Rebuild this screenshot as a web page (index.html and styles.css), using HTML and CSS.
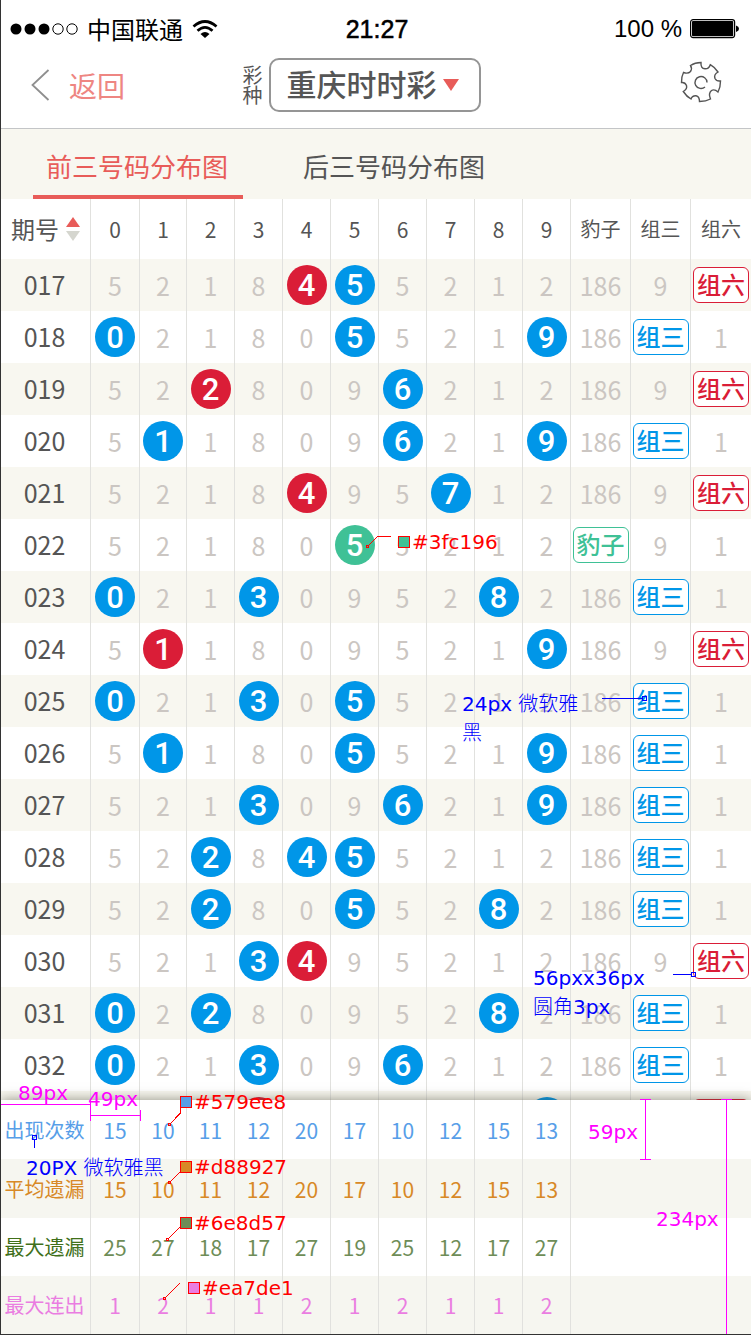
FILE: index.html
```html
<!DOCTYPE html>
<html lang="zh-CN">
<head>
<meta charset="utf-8">
<meta name="viewport" content="width=device-width, initial-scale=1">
<title>前三号码分布图</title>
<link rel="stylesheet" href="styles.css">
</head>
<body>
<div class="screen">
  <div class="status">
    <div class="carrier">
      <svg width="68" height="12" viewBox="0 0 68 12"><g fill="#000"><circle cx="6" cy="6" r="5.5"/><circle cx="20" cy="6" r="5.5"/><circle cx="34" cy="6" r="5.5"/></g><g fill="none" stroke="#000"><circle cx="48" cy="6" r="5.2"/><circle cx="62" cy="6" r="5.2"/></g></svg>
      <span>中国联通</span>
      <svg width="26" height="18" viewBox="0 0 26 18"><g fill="none" stroke="#000" stroke-width="2.8"><path d="M1.5 6.500Q13-3.500 24.500 6.500"/><path d="M5.500 10.800Q13 4 20.500 10.800"/></g><path d="M8.500 14Q13 9.800 17.500 14L13 18z"/></svg>
    </div>
    <time class="clock">21:27</time>
    <div class="power">
      <span>100 %</span>
      <svg width="50" height="20" viewBox="0 0 50 20"><rect x=".6" y=".6" width="44" height="18" rx="2.500" fill="none" stroke="#000" stroke-width="1.200"/><rect x="2" y="2" width="41.200" height="15.200" rx="1"/><path d="M46 6.500q3 1 3 3.300t-3 3.300z"/></svg>
    </div>
  </div>

  <header class="nav">
    <a class="back" href="#">
      <svg width="19" height="32" viewBox="0 0 19 32"><path d="M17.500 1L1.500 16L17.500 31" fill="none" stroke="#8f8f8f" stroke-width="1.800"/></svg>
      <span>返回</span>
    </a>
    <div class="lottery">
      <label for="lottery">彩种</label>
      <div class="picker">
        <select id="lottery"><option>重庆时时彩</option></select>
        <svg width="16" height="12" viewBox="0 0 16 12"><path d="M0 0H16L8 12z" fill="#e85c59"/></svg>
      </div>
    </div>
    <button class="settings" type="button" aria-label="设置">
      <svg width="42" height="42" viewBox="0 0 42 42" fill="none" stroke="#555" stroke-width="1.400"><path d="M10.500 4.500Q15 1.500 21 1.500Q20.500 7.500 25 7.800Q29 7.900 30.300 3.700Q34.500 6 38 11Q33.500 13.500 35 17.500Q36.500 20.500 40.500 20Q40.500 26.500 38 31Q34.500 27.700 31.500 29.500Q28 32.500 30.500 38Q26 40.500 19.500 40.500Q19.500 35.500 16 34.700Q12 34.500 11 38Q6.500 35.500 3.300 30.500Q7.500 28 6.500 24.500Q5 21 1.500 21.500Q1.200 16 3.500 11.500Q8 13.200 10.500 10.500Q12.500 7.500 10.500 4.500Z"/><path d="M27 21.500A6 6 0 1 0 25 26"/></svg>
    </button>
  </header>

  <nav class="tabs">
    <a class="tab active" href="#" aria-current="page">前三号码分布图</a>
    <a class="tab" href="#">后三号码分布图</a>
  </nav>

  <table class="grid chart">
    <colgroup><col class="c-issue"><col class="c-one"><col class="c-two"><col span="8" class="c-num"><col span="3" class="c-type"></colgroup>
    <thead>
      <tr><th class="issue"><button class="sort" type="button">期号<svg width="14" height="24" viewBox="0 0 14 24"><path d="M7 0L14 10H0z" fill="#e85c59"/><path d="M0 14H14L7 24z" fill="#d5d6cf"/></svg></button></th><th>0</th><th>1</th><th>2</th><th>3</th><th>4</th><th>5</th><th>6</th><th>7</th><th>8</th><th>9</th><th class="kind">豹子</th><th class="kind">组三</th><th class="kind">组六</th></tr>
    </thead>
    <tbody>
      <tr><th>017</th><td>5</td><td>2</td><td>1</td><td>8</td><td><b class="red">4</b></td><td><b>5</b></td><td>5</td><td>2</td><td>1</td><td>2</td><td>186</td><td>9</td><td><em class="six">组六</em></td></tr>
      <tr><th>018</th><td><b>0</b></td><td>2</td><td>1</td><td>8</td><td>0</td><td><b>5</b></td><td>5</td><td>2</td><td>1</td><td><b>9</b></td><td>186</td><td><em>组三</em></td><td>1</td></tr>
      <tr><th>019</th><td>5</td><td>2</td><td><b class="red">2</b></td><td>8</td><td>0</td><td>9</td><td><b>6</b></td><td>2</td><td>1</td><td>2</td><td>186</td><td>9</td><td><em class="six">组六</em></td></tr>
      <tr><th>020</th><td>5</td><td><b>1</b></td><td>1</td><td>8</td><td>0</td><td>9</td><td><b>6</b></td><td>2</td><td>1</td><td><b>9</b></td><td>186</td><td><em>组三</em></td><td>1</td></tr>
      <tr><th>021</th><td>5</td><td>2</td><td>1</td><td>8</td><td><b class="red">4</b></td><td>9</td><td>5</td><td><b>7</b></td><td>1</td><td>2</td><td>186</td><td>9</td><td><em class="six">组六</em></td></tr>
      <tr><th>022</th><td>5</td><td>2</td><td>1</td><td>8</td><td>0</td><td><b class="green">5</b></td><td>5</td><td>2</td><td>1</td><td>2</td><td><em class="triple">豹子</em></td><td>9</td><td>1</td></tr>
      <tr><th>023</th><td><b>0</b></td><td>2</td><td>1</td><td><b>3</b></td><td>0</td><td>9</td><td>5</td><td>2</td><td><b>8</b></td><td>2</td><td>186</td><td><em>组三</em></td><td>1</td></tr>
      <tr><th>024</th><td>5</td><td><b class="red">1</b></td><td>1</td><td>8</td><td>0</td><td>9</td><td>5</td><td>2</td><td>1</td><td><b>9</b></td><td>186</td><td>9</td><td><em class="six">组六</em></td></tr>
      <tr><th>025</th><td><b>0</b></td><td>2</td><td>1</td><td><b>3</b></td><td>0</td><td><b>5</b></td><td>5</td><td>2</td><td>1</td><td>2</td><td>186</td><td><em>组三</em></td><td>1</td></tr>
      <tr><th>026</th><td>5</td><td><b>1</b></td><td>1</td><td>8</td><td>0</td><td><b>5</b></td><td>5</td><td>2</td><td>1</td><td><b>9</b></td><td>186</td><td><em>组三</em></td><td>1</td></tr>
      <tr><th>027</th><td>5</td><td>2</td><td>1</td><td><b>3</b></td><td>0</td><td>9</td><td><b>6</b></td><td>2</td><td>1</td><td><b>9</b></td><td>186</td><td><em>组三</em></td><td>1</td></tr>
      <tr><th>028</th><td>5</td><td>2</td><td><b>2</b></td><td>8</td><td><b>4</b></td><td><b>5</b></td><td>5</td><td>2</td><td>1</td><td>2</td><td>186</td><td><em>组三</em></td><td>1</td></tr>
      <tr><th>029</th><td>5</td><td>2</td><td><b>2</b></td><td>8</td><td>0</td><td><b>5</b></td><td>5</td><td>2</td><td><b>8</b></td><td>2</td><td>186</td><td><em>组三</em></td><td>1</td></tr>
      <tr><th>030</th><td>5</td><td>2</td><td>1</td><td><b>3</b></td><td><b class="red">4</b></td><td>9</td><td>5</td><td>2</td><td>1</td><td>2</td><td>186</td><td>9</td><td><em class="six">组六</em></td></tr>
      <tr><th>031</th><td><b>0</b></td><td>2</td><td><b>2</b></td><td>8</td><td>0</td><td>9</td><td>5</td><td>2</td><td><b>8</b></td><td>2</td><td>186</td><td><em>组三</em></td><td>1</td></tr>
      <tr><th>032</th><td><b>0</b></td><td>2</td><td>1</td><td><b>3</b></td><td>0</td><td>9</td><td><b>6</b></td><td>2</td><td>1</td><td>2</td><td>186</td><td><em>组三</em></td><td>1</td></tr>
      <tr class="peek"><th></th><td></td><td></td><td></td><td><b class="red"></b></td><td></td><td></td><td></td><td></td><td></td><td><b></b></td><td></td><td></td><td><em class="six"></em></td></tr>
    </tbody>
  </table>

  <div class="summary">
    <table class="grid totals">
      <colgroup><col class="c-issue"><col class="c-one"><col class="c-two"><col span="8" class="c-num"><col span="3" class="c-type"></colgroup>
      <tbody>
        <tr class="count"><th>出现次数</th><td>15</td><td>10</td><td>11</td><td>12</td><td>20</td><td>17</td><td>10</td><td>12</td><td>15</td><td>13</td><td colspan="3"></td></tr>
        <tr class="average"><th>平均遗漏</th><td>15</td><td>10</td><td>11</td><td>12</td><td>20</td><td>17</td><td>10</td><td>12</td><td>15</td><td>13</td><td colspan="3"></td></tr>
        <tr class="longest"><th>最大遗漏</th><td>25</td><td>27</td><td>18</td><td>17</td><td>27</td><td>19</td><td>25</td><td>12</td><td>17</td><td>27</td><td colspan="3"></td></tr>
        <tr class="streak"><th>最大连出</th><td>1</td><td>2</td><td>1</td><td>1</td><td>2</td><td>1</td><td>2</td><td>1</td><td>1</td><td>2</td><td colspan="3"></td></tr>
      </tbody>
    </table>
  </div>

  <!-- Design notes pinned over the screen -->
  <div class="notes">
    <svg class="leaders" width="751" height="1335" viewBox="0 0 751 1335" fill="none" shape-rendering="crispEdges">
      <g stroke="#f00"><path d="M368 546L377.500 536.500H391"/><path d="M170 1124L180.500 1113V1107"/><path d="M170 1182L180 1172"/><path d="M168 1239L180 1227"/><path d="M165 1298L180 1283"/>
        <path d="M366.500 545.500h2v2h-2zM168.500 1123.500h2v2h-2zM168.500 1181.500h2v2h-2zM166.500 1238.500h2v2h-2zM163.500 1297.500h2v2h-2z"/>
        <rect x="398.500" y="536.500" width="11" height="11" fill="#3fc196"/><rect x="180.500" y="1096.500" width="11" height="11" fill="#579ee8"/><rect x="180.500" y="1161.500" width="11" height="11" fill="#d88927"/><rect x="180.500" y="1217.500" width="11" height="11" fill="#6e8d57"/><rect x="188.500" y="1282.500" width="11" height="11" fill="#ea7de1"/></g>
      <g stroke="#00f"><path d="M602 698.500H643M642.500 696.500h4v4h-4zM673 974.500H691M691.500 972.500h4v4h-4zM32.500 1135.500h4v4h-4zM34.500 1140V1148"/></g>
      <g stroke="#f0f"><path d="M0 1104.500H90M.5 1099V1110M90.500 1099V1121M90 1115.500H140M140.500 1110V1121M640 1099.500H651M645.500 1099V1160M640 1159.500H651M721 1099.500H732M726.500 1099V1335M721 1334.500H732"/></g>
    </svg>
    <span class="note hex n-green">#3fc196</span>
    <span class="note hex n-blue">#579ee8</span>
    <span class="note hex n-orange">#d88927</span>
    <span class="note hex n-olive">#6e8d57</span>
    <span class="note hex n-pink">#ea7de1</span>
    <span class="note spec n-font">24px <i>微软雅黑</i></span>
    <span class="note spec n-tag">56pxx36px<br><i>圆角</i>3px</span>
    <span class="note spec n-label">20PX <i>微软雅黑</i></span>
    <span class="note size n-89">89px</span>
    <span class="note size n-49">49px</span>
    <span class="note size n-59">59px</span>
    <span class="note size n-234">234px</span>
  </div>
</div>
</body>
</html>
```

FILE: styles.css
```css
* { box-sizing: border-box; }
body { margin: 0; background: #fff; color: #555; font-family: "Noto Sans CJK SC", sans-serif; }
svg { display: block; flex: none; }
a { color: inherit; text-decoration: none; }
button, select { margin: 0; padding: 0; border: 0; background: none; color: inherit; font: inherit; }

.screen { position: relative; overflow: hidden; border-left: 1px solid #333; border-bottom: 1px solid #333; }

/* Status bar */
.status { display: grid; grid-template-columns: 1fr auto 1fr; align-items: center; height: 58px; padding: 0 11px 0 9px; color: #000; font-family: "Liberation Sans", "Noto Sans CJK SC", sans-serif; font-size: 24px; line-height: 36px; }
.carrier, .power { display: flex; align-items: center; gap: 9px; }
.carrier span { font-family: "Noto Sans CJK SC", sans-serif; }
.power { justify-content: flex-end; gap: 8px; }
.clock { padding-left: 4px; font-size: 25px; -webkit-text-stroke: thin; }

/* Navigation bar */
.nav { display: grid; grid-template-columns: 1fr auto 1fr; align-items: center; height: 71px; padding: 0 29px 17px 30px; border-bottom: 1px solid #c3c5c7; }
.back { display: flex; align-items: center; gap: 19px; color: #ee8682; font-size: 28px; line-height: 40px; }
.lottery { display: flex; align-items: center; gap: 6px; margin-right: 30px; }
.lottery label { width: 20px; font-size: 20px; line-height: 20px; }
.picker { position: relative; }
.picker select { display: block; width: 212px; height: 54px; padding: 0 0 4px 16px; border: 2px solid #959595; border-radius: 10px; appearance: none; font-size: 30px; font-weight: 500; }
.picker svg { position: absolute; top: 21px; right: 22px; pointer-events: none; }
.settings { align-self: start; justify-self: end; padding-top: 3px; }

/* Tabs */
.tabs { display: flex; gap: 48px; height: 70px; padding-left: 32px; background: #f8f7f0; font-size: 26px; line-height: 74px; }
.tab { padding: 0 12px; }
.tab.active { padding: 0 15px 0 13px; border-bottom: 4px solid #e85c59; color: #e85c59; }

/* Grids */
.grid { width: 100%; table-layout: fixed; border-spacing: 0; text-align: center; white-space: nowrap; }
.c-issue { width: 90px; }
.c-one { width: 49px; }
.c-two { width: 47px; }
.c-num { width: 48px; }
.c-type { width: 60px; }
.grid th, .grid td { padding: 0; border-right: 1px solid #e1e1de; font-weight: 400; }
.grid th:last-child, .grid td:last-child { border-right: 0; }
.chart thead th { height: 60px; font-size: 21px; line-height: 30px; }
.chart thead .kind { font-size: 20px; }
.sort { display: flex; align-items: center; justify-content: center; gap: 7px; width: 100%; font-size: 24px; }
.chart tbody tr { height: 52px; }
.chart tbody tr:nth-child(odd) { background: #f8f7f0; }
.chart tbody th { padding: 0 2px 2px 0; font-size: 25px; line-height: 36px; }
.chart tbody td { color: #cbc6c2; font-size: 25px; line-height: 36px; }
.chart b { display: block; width: 40px; height: 40px; margin: 0 auto; border-radius: 50%; background: #0096e8; color: #fff; font: 500 31px/42px Roboto, sans-serif; }
.chart b.red { background: #da1d37; }
.chart b.green { background: #3fc196; }
.chart em { display: block; width: 56px; height: 36px; margin: 0 auto; border: 1px solid; border-radius: 6px; background: #fff; color: #0096e8; font-size: 24px; font-style: normal; font-weight: 500; line-height: 32px; }
.chart em.six { color: #da1d37; }
.chart em.triple { color: #3fc196; }
.chart .peek em { background: currentColor; }

/* Totals sit over the last chart row */
.summary { position: relative; margin-top: -43px; background: #fff; box-shadow: 0 0 12px rgba(70, 70, 50, .6); }
.totals { font-size: 21px; line-height: 30px; }
.totals tr { height: 58px; }
.totals tr:nth-child(-n+2) { height: 59px; }
.totals tr:nth-child(even) { background: #f6f6f0; }
.totals th { padding-right: 2px; font-size: 20px; }
.count { color: #579ee8; }
.average { color: #d88927; }
.longest { color: #6e8d57; }
.longest th { color: #40701a; }
.streak { color: #ea7de1; }

/* Design notes */
.notes { position: absolute; top: 0; left: -1px; pointer-events: none; font: 20px/27px "DejaVu Sans", "Noto Sans CJK SC", sans-serif; }
.note { position: absolute; white-space: nowrap; }
.hex { color: #f00; }
.spec { color: #00f; }
.spec i { font-style: normal; font-weight: 300; font-family: "Noto Sans CJK SC", sans-serif; }
.size { color: #f0f; }
.n-green { left: 412px; top: 529px; }
.n-blue { left: 194px; top: 1089px; }
.n-orange { left: 194px; top: 1154px; }
.n-olive { left: 194px; top: 1210px; }
.n-pink { left: 202px; top: 1275px; }
.n-font { left: 462px; top: 689px; width: 124px; white-space: normal; }
.n-tag { left: 533px; top: 965px; }
.n-label { left: 26px; top: 1153px; }
.n-89 { left: 18px; top: 1080px; }
.n-49 { left: 88px; top: 1086px; }
.n-59 { left: 588px; top: 1119px; }
.n-234 { left: 656px; top: 1206px; }
```
